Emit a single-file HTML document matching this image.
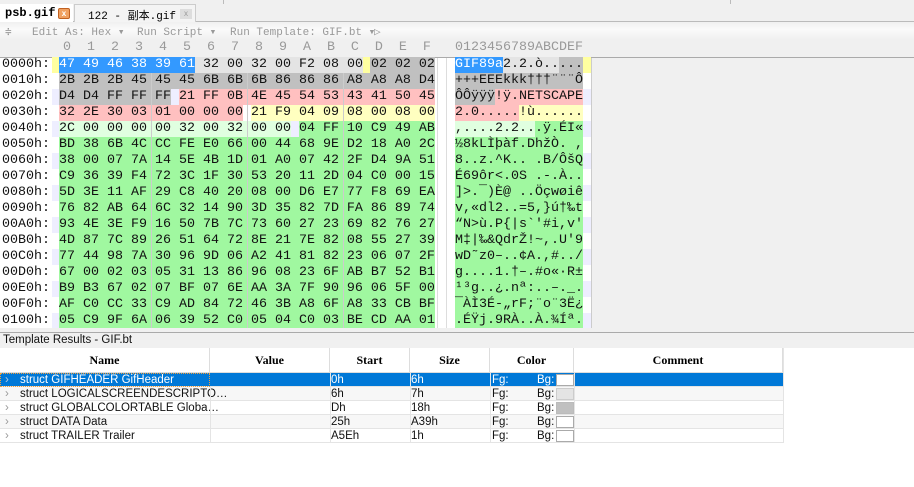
<!DOCTYPE html>
<html><head><meta charset="utf-8"><style>
*{margin:0;padding:0;box-sizing:border-box}
body{width:914px;height:487px;overflow:hidden;background:#f0f0f0;position:relative;font-family:"Liberation Mono","Noto Sans CJK SC",monospace}
.a{position:absolute}
pre{position:absolute;font-family:"Liberation Mono",monospace;font-size:13.33px;line-height:16px;color:#111;white-space:pre}
.b{position:absolute;height:16px}
.tb{position:absolute;top:25px;font:11px 'Liberation Mono',monospace;color:#999;white-space:pre}
.th{position:absolute;top:348px;height:25px;border-right:1px solid #ddd;border-bottom:1px solid #ddd;font:bold 12px "Liberation Serif",serif;text-align:center;line-height:25px;background:#fff}
.tr{position:absolute;left:0;width:783px;height:14px;border-bottom:1px solid #e4e4e4;font:11.5px "Liberation Sans Narrow","Liberation Sans",sans-serif;line-height:14px;color:#111}
.tr span{position:absolute;top:0}
.sw{position:absolute;left:556px;top:1px;width:18px;height:12px;border:1px solid #aaa;background:#fff}
</style></head><body>
<!-- tabs -->
<div class="a" style="left:0;top:0;width:914px;height:22px;background:#f0f0f0;border-bottom:1px solid #bbb"></div>
<div class="a" style="left:0;top:4px;width:73px;height:19px;background:#fff"></div>
<div class="a" style="left:5px;top:6px;font:bold 12px 'Liberation Mono',monospace">psb.gif</div>
<div class="a" style="left:58px;top:8px;width:12px;height:11px;background:#f0a060;border:1px solid #c06020;border-radius:2px;font:bold 8px sans-serif;color:#fff;text-align:center;line-height:9px">x</div>
<div class="a" style="left:74px;top:4px;width:122px;height:18px;border:1px solid #ccc;border-bottom:none;background:#f4f4f4"></div>
<div class="a" style="left:88px;top:7px;font:11px 'Liberation Mono','Noto Sans CJK SC',monospace;white-space:nowrap">122 - 副本.gif</div>
<div class="a" style="left:180px;top:9px;width:12px;height:10px;background:#ddd;font:8px sans-serif;color:#999;text-align:center;line-height:10px">x</div>
<div class="a" style="left:223px;top:0;width:1px;height:4px;background:#bbb"></div>
<div class="a" style="left:730px;top:0;width:1px;height:4px;background:#bbb"></div>
<!-- toolbar -->
<div class="a" style="left:0;top:22px;width:914px;height:18px;background:linear-gradient(#f0f0f0,#fafafa 40%,#f0f0f0)"></div>
<div class="tb" style="left:5px">≑</div>
<div class="tb" style="left:32px">Edit As: Hex ▾</div>
<div class="tb" style="left:137px">Run Script ▾</div>
<div class="tb" style="left:230px">Run Template: GIF.bt ▾</div>
<div class="tb" style="left:374px">▷</div>
<!-- column header -->
<pre style="left:63px;top:41px;color:#999;line-height:14px">0  1  2  3  4  5  6  7  8  9  A  B  C  D  E  F</pre>
<pre style="left:455px;top:41px;color:#999;line-height:14px">0123456789ABCDEF</pre>
<div class="a" style="left:0;top:57px;width:914px;height:1px;background:#aaa"></div>
<!-- hex panel backgrounds -->
<div class="a" style="left:0;top:58px;width:592px;height:270px;background:#fff"></div>
<div class="b" style="left:52px;top:57px;width:7px;background:#ffffa0"></div>
<div class="b" style="left:583px;top:57px;width:8px;background:#ffffa0"></div>
<div class="b" style="left:52px;top:89px;width:540px;background:#eeeeff"></div>
<div class="b" style="left:52px;top:121px;width:540px;background:#eeeeff"></div>
<div class="b" style="left:52px;top:153px;width:540px;background:#eeeeff"></div>
<div class="b" style="left:52px;top:185px;width:540px;background:#eeeeff"></div>
<div class="b" style="left:52px;top:217px;width:540px;background:#eeeeff"></div>
<div class="b" style="left:52px;top:249px;width:540px;background:#eeeeff"></div>
<div class="b" style="left:52px;top:281px;width:540px;background:#eeeeff"></div>
<div class="b" style="left:52px;top:313px;width:540px;background:#eeeeff"></div>
<div class="a" style="left:435px;top:58px;width:20px;height:270px;background:#fff"></div>
<div class="a" style="left:437px;top:58px;width:1px;height:270px;background:#ddd"></div>
<div class="a" style="left:446px;top:58px;width:1px;height:270px;background:#ddd"></div>
<div class="a" style="left:591px;top:58px;width:1px;height:270px;background:#ccc"></div>
<!-- hex color bands -->
<div class="b" style="left:59px;top:57px;width:136px;background:#3399ff"></div>
<div class="b" style="left:195px;top:57px;width:168px;background:#e4e4e4"></div>
<div class="b" style="left:363px;top:57px;width:7px;background:#ffffa0"></div>
<div class="b" style="left:370px;top:57px;width:65px;background:#c0c0c0"></div>
<div class="b" style="left:59px;top:73px;width:376px;background:#c0c0c0"></div>
<div class="b" style="left:59px;top:89px;width:112px;background:#c0c0c0"></div>
<div class="b" style="left:179px;top:89px;width:256px;background:#ffc0c0"></div>
<div class="b" style="left:59px;top:105px;width:184px;background:#ffc0c0"></div>
<div class="b" style="left:251px;top:105px;width:184px;background:#ffffc0"></div>
<div class="b" style="left:59px;top:121px;width:232px;background:#e0ffe0"></div>
<div class="b" style="left:299px;top:121px;width:136px;background:#a0f8a0"></div>
<div class="a" style="left:59px;top:137px;width:376px;height:191px;background:#a0f8a0"></div>
<!-- ascii bands -->
<div class="b" style="left:455px;top:57px;width:48px;background:#3399ff"></div>
<div class="b" style="left:503px;top:57px;width:56px;background:#e4e4e4"></div>
<div class="b" style="left:559px;top:57px;width:24px;background:#c0c0c0"></div>
<div class="b" style="left:455px;top:73px;width:128px;background:#c0c0c0"></div>
<div class="b" style="left:455px;top:89px;width:40px;background:#c0c0c0"></div>
<div class="b" style="left:495px;top:89px;width:88px;background:#ffc0c0"></div>
<div class="b" style="left:455px;top:105px;width:64px;background:#ffc0c0"></div>
<div class="b" style="left:519px;top:105px;width:64px;background:#ffffc0"></div>
<div class="b" style="left:455px;top:121px;width:80px;background:#e0ffe0"></div>
<div class="b" style="left:535px;top:121px;width:48px;background:#a0f8a0"></div>
<div class="a" style="left:455px;top:137px;width:128px;height:191px;background:#a0f8a0"></div>
<!-- separators -->
<div class="a" style="left:151px;top:73px;width:1px;height:255px;background:#ccc"></div>
<div class="a" style="left:247px;top:73px;width:1px;height:255px;background:#ccc"></div>
<div class="a" style="left:343px;top:73px;width:1px;height:255px;background:#ccc"></div>
<!-- text -->
<pre style="left:2px;top:57px">0000h:
0010h:
0020h:
0030h:
0040h:
0050h:
0060h:
0070h:
0080h:
0090h:
00A0h:
00B0h:
00C0h:
00D0h:
00E0h:
00F0h:
0100h:</pre>
<pre style="left:59px;top:57px"><span style="color:#fff">47 49 46 38 39 61</span> 32 00 32 00 F2 08 00 02 02 02
2B 2B 2B 45 45 45 6B 6B 6B 86 86 86 A8 A8 A8 D4
D4 D4 FF FF FF 21 FF 0B 4E 45 54 53 43 41 50 45
32 2E 30 03 01 00 00 00 21 F9 04 09 08 00 08 00
2C 00 00 00 00 32 00 32 00 00 04 FF 10 C9 49 AB
BD 38 6B 4C CC FE E0 66 00 44 68 9E D2 18 A0 2C
38 00 07 7A 14 5E 4B 1D 01 A0 07 42 2F D4 9A 51
C9 36 39 F4 72 3C 1F 30 53 20 11 2D 04 C0 00 15
5D 3E 11 AF 29 C8 40 20 08 00 D6 E7 77 F8 69 EA
76 82 AB 64 6C 32 14 90 3D 35 82 7D FA 86 89 74
93 4E 3E F9 16 50 7B 7C 73 60 27 23 69 82 76 27
4D 87 7C 89 26 51 64 72 8E 21 7E 82 08 55 27 39
77 44 98 7A 30 96 9D 06 A2 41 81 82 23 06 07 2F
67 00 02 03 05 31 13 86 96 08 23 6F AB B7 52 B1
B9 B3 67 02 07 BF 07 6E AA 3A 7F 90 96 06 5F 00
AF C0 CC 33 C9 AD 84 72 46 3B A8 6F A8 33 CB BF
05 C9 9F 6A 06 39 52 C0 05 04 C0 03 BE CD AA 01</pre>
<pre style="left:455px;top:57px"><span style="color:#fff">GIF89a</span>2.2.ò.....
+++EEEkkk†††¨¨¨Ô
ÔÔÿÿÿ!ÿ.NETSCAPE
2.0.....!ù......
,....2.2...ÿ.ÉI«
½8kLÌþàf.DhžÒ. ,
8..z.^K.. .B/ÔšQ
É69ôr&lt;.0S .-.À..
]&gt;.¯)È@ ..Öçwøiê
v,«dl2..=5,}ú†‰t
“N&gt;ù.P{|s`'#i,v'
M‡|‰&amp;QdrŽ!~,.U'9
wD˜z0–..¢A.,#../
g....1.†–.#o«·R±
¹³g..¿.nª:..–._.
¯ÀÌ3É-„rF;¨o¨3Ë¿
.ÉŸj.9RÀ..À.¾Íª.</pre>
<!-- template section -->
<div class="a" style="left:0;top:328px;width:914px;height:5px;background:#f0f0f0"></div>
<div class="a" style="left:0;top:332px;width:914px;height:1px;background:#aaa"></div>
<div class="a" style="left:0;top:333px;width:914px;height:15px;background:#f0f0f0"></div>
<div class="a" style="left:3px;top:334px;font:11.5px 'Liberation Sans Narrow','Liberation Sans',sans-serif;color:#111">Template Results - GIF.bt</div>
<div class="a" style="left:0;top:348px;width:914px;height:139px;background:#fff"></div>
<div class="th" style="left:0;width:210px">Name</div>
<div class="th" style="left:210px;width:120px">Value</div>
<div class="th" style="left:330px;width:80px">Start</div>
<div class="th" style="left:410px;width:80px">Size</div>
<div class="th" style="left:490px;width:84px">Color</div>
<div class="th" style="left:574px;width:209px">Comment</div>

<div class="tr" style="top:373px;background:#0078d7;color:#fff"><span style="left:0;width:210px;height:14px;border:1px dotted #f0a040"></span><span style="left:5px;color:#bcd">›</span><span style="left:20px">struct GIFHEADER GifHeader</span><span style="left:331px">0h</span><span style="left:411px">6h</span><span style="left:492px">Fg:</span><span style="left:537px">Bg:</span><div class="sw" style="background:#fff"></div></div>
<div class="tr" style="top:387px;background:#f7f7f7"><span style="left:5px;color:#999">›</span><span style="left:20px">struct LOGICALSCREENDESCRIPTO…</span><span style="left:331px">6h</span><span style="left:411px">7h</span><span style="left:492px">Fg:</span><span style="left:537px">Bg:</span><div class="sw" style="background:#e4e4e4;border-color:#ccc"></div></div>
<div class="tr" style="top:401px"><span style="left:5px;color:#999">›</span><span style="left:20px">struct GLOBALCOLORTABLE Globa…</span><span style="left:331px">Dh</span><span style="left:411px">18h</span><span style="left:492px">Fg:</span><span style="left:537px">Bg:</span><div class="sw" style="background:#c0c0c0;border-color:#bbb"></div></div>
<div class="tr" style="top:415px;background:#f7f7f7"><span style="left:5px;color:#999">›</span><span style="left:20px">struct DATA Data</span><span style="left:331px">25h</span><span style="left:411px">A39h</span><span style="left:492px">Fg:</span><span style="left:537px">Bg:</span><div class="sw"></div></div>
<div class="tr" style="top:429px"><span style="left:5px;color:#999">›</span><span style="left:20px">struct TRAILER Trailer</span><span style="left:331px">A5Eh</span><span style="left:411px">1h</span><span style="left:492px">Fg:</span><span style="left:537px">Bg:</span><div class="sw"></div></div>
<div class="a" style="left:210px;top:387px;width:1px;height:56px;background:#e4e4e4"></div>
<div class="a" style="left:330px;top:373px;width:1px;height:70px;background:#e4e4e4"></div>
<div class="a" style="left:410px;top:373px;width:1px;height:70px;background:#e4e4e4"></div>
<div class="a" style="left:490px;top:373px;width:1px;height:70px;background:#e4e4e4"></div>
<div class="a" style="left:574px;top:373px;width:1px;height:70px;background:#e4e4e4"></div>
<div class="a" style="left:783px;top:348px;width:1px;height:95px;background:#e4e4e4"></div>
</body></html>
